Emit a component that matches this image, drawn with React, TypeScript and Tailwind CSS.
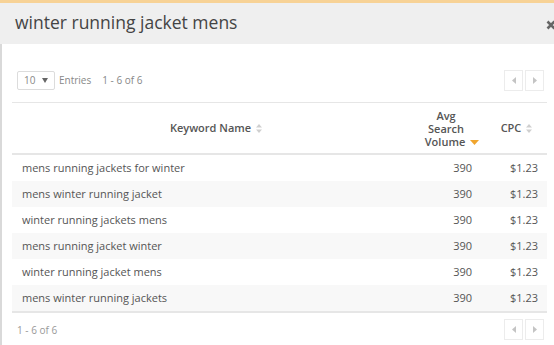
import React from "react";

const rows = [
  "mens running jackets for winter",
  "mens winter running jacket",
  "winter running jackets mens",
  "mens running jacket winter",
  "winter running jacket mens",
  "mens winter running jackets",
];

function SortIcon() {
  return (
    <svg width="6" height="9" viewBox="0 0 6 9" className="inline-block ml-[5px] align-[-1px]">
      <path d="M0 3.5 L3 0 L6 3.5 Z" fill="#cfcfcf" />
      <path d="M0 5.5 L3 9 L6 5.5 Z" fill="#cfcfcf" />
    </svg>
  );
}

function SortDown() {
  return (
    <svg width="9" height="5" viewBox="0 0 9 5" className="inline-block ml-[5px] align-[1px]">
      <path d="M0 0 L9 0 L4.5 5 Z" fill="#f0a52e" />
    </svg>
  );
}

function Pager() {
  return (
    <div className="flex gap-[2px]">
      <div className="w-[19px] h-[21px] border border-[#ececec] flex items-center justify-center">
        <svg width="4" height="7" viewBox="0 0 4 7">
          <path d="M4 0 L0 3.5 L4 7 Z" fill="#c4c4c4" />
        </svg>
      </div>
      <div className="w-[19px] h-[21px] border border-[#ececec] flex items-center justify-center">
        <svg width="4" height="7" viewBox="0 0 4 7">
          <path d="M0 0 L4 3.5 L0 7 Z" fill="#c4c4c4" />
        </svg>
      </div>
    </div>
  );
}

export default function App() {
  return (
    <div
      className="w-[554px] h-[345px] overflow-hidden bg-white flex flex-col"
      style={{ fontFamily: '"Open Sans", sans-serif' }}
    >
      <div className="h-[3px] bg-[#f7d296] shrink-0" />
      <div className="h-[41px] shrink-0 bg-[#efefef] flex items-center pl-[15px]">
        <h1 className="flex-1 text-[17.5px] text-[#444] leading-none pb-[1px]">winter running jacket mens</h1>
        <svg width="8" height="10" viewBox="0 0 8 10" className="mb-[-2px] shrink-0">
          <path d="M1.5 1.5 L8.5 8.5 M8.5 1.5 L1.5 8.5" stroke="#666" strokeWidth="2.6" />
        </svg>
      </div>
      <div className="flex-1 pl-[12px] pt-[26px] shadow-[inset_2px_0_0_#d9d9d9]">
        <div className="w-[535px]">
          <div className="flex items-center justify-between pl-[5px] pr-[3px] mb-[11px]">
            <div className="flex items-center text-[10px] text-[#888]">
              <div className="w-[38px] h-[19px] border border-[#dcdcdc] rounded-[2px] flex items-center justify-between pl-[6px] pr-[6px] text-[#888]">
                <span>10</span>
                <svg width="6" height="5" viewBox="0 0 6 5">
                  <path d="M0 0 L6 0 L3 5 Z" fill="#666" />
                </svg>
              </div>
              <span className="ml-[4px]">Entries</span>
              <span className="ml-[11px]">1 - 6 of 6</span>
            </div>
            <Pager />
          </div>
          <div className="text-[11px] text-[#555]">
            <div className="grid grid-cols-[1fr_72px_65px] items-center h-[53px] border-t border-b-2 border-[#e6e6e6] font-semibold">
              <div className="text-center pl-[10px]">
                Keyword Name
                <SortIcon />
              </div>
              <div className="text-center pt-[1px]">
                <div className="leading-[13px]">Avg</div>
                <div className="leading-[13px]">Search</div>
                <div className="leading-[13px] pl-[12px]">
                  Volume
                  <SortDown />
                </div>
              </div>
              <div className="text-center pl-[4px]">
                CPC
                <SortIcon />
              </div>
            </div>
            {rows.map((r, i) => (
              <div
                key={r}
                className={`grid grid-cols-[1fr_72px_65px] items-center h-[26px] ${i % 2 === 1 ? "bg-[#f8f8f8]" : "bg-white"}`}
              >
                <div className="pl-[10px]">{r}</div>
                <div className="text-right pr-[10px]">390</div>
                <div className="text-right pr-[9px]">$1.23</div>
              </div>
            ))}
            <div className="h-[2px] bg-[#e6e6e6]" />
          </div>
          <div className="flex items-center justify-between pl-[5px] pr-[3px] mt-[6px]">
            <span className="text-[10px] text-[#999] pt-[2px]">1 - 6 of 6</span>
            <Pager />
          </div>
        </div>
      </div>
    </div>
  );
}
